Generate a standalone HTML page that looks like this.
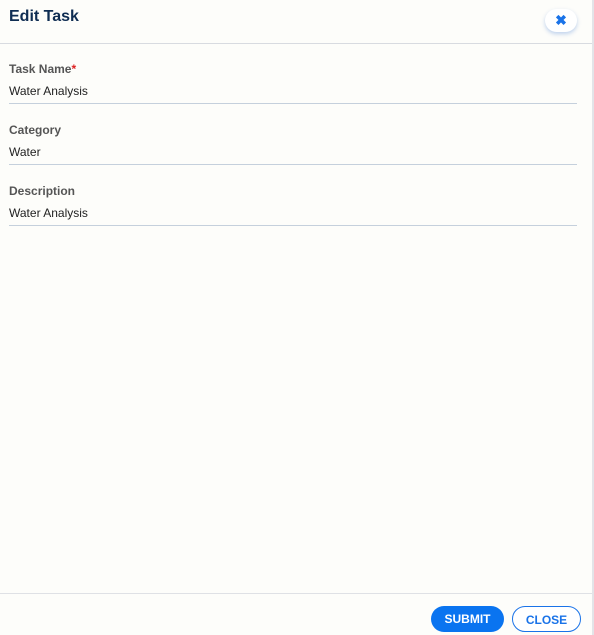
<!DOCTYPE html><html><head><style>
body{margin:0;width:594px;height:635px;background:#fdfdfa;font-family:"Liberation Sans",sans-serif;position:relative;overflow:hidden}
.rb{position:absolute;left:592px;top:0;width:2px;height:635px;background:#e3e4e8}
.hd{position:absolute;left:0;top:0;width:592px;height:43px;border-bottom:1px solid #d8dbe0}
.t{position:absolute;left:9px;top:8px;font-size:16px;font-weight:bold;color:#0f2d52}
.x{position:absolute;left:545px;top:9px;width:32px;height:23px;border-radius:12px;background:#fff;box-shadow:0 2px 4px rgba(0,80,200,.25);color:#1a73e8;font-weight:bold;text-align:center;line-height:23px;font-size:14px}
.l{position:absolute;left:9px;font-size:12px;font-weight:bold;color:#555}
.v{position:absolute;left:9px;font-size:12px;color:#222}
.ln{position:absolute;left:9px;width:568px;height:1px;background:#c5d0dc}
.ft{position:absolute;left:0;top:593px;width:592px;height:1px;background:#dfe1e5}
.b{position:absolute;top:606px;height:26px;border-radius:13px;font-size:12px;font-weight:bold;text-align:center;line-height:26px;box-sizing:border-box}
</style></head><body>
<div class="rb"></div>
<div class="hd"><div class="t">Edit Task</div><div class="x">✖</div></div>
<div class="l" style="top:62px">Task Name<span style="color:#d22">*</span></div>
<div class="v" style="top:84px">Water Analysis</div><div class="ln" style="top:103px"></div>
<div class="l" style="top:123px">Category</div>
<div class="v" style="top:145px">Water</div><div class="ln" style="top:164px"></div>
<div class="l" style="top:184px">Description</div>
<div class="v" style="top:206px">Water Analysis</div><div class="ln" style="top:225px"></div>
<div class="ft"></div>
<div class="b" style="left:431px;width:73px;background:#0a74f0;color:#fff">SUBMIT</div>
<div class="b" style="left:512px;width:69px;border:1px solid #1a73e8;color:#1a73e8;background:#fff">CLOSE</div>
</body></html>
